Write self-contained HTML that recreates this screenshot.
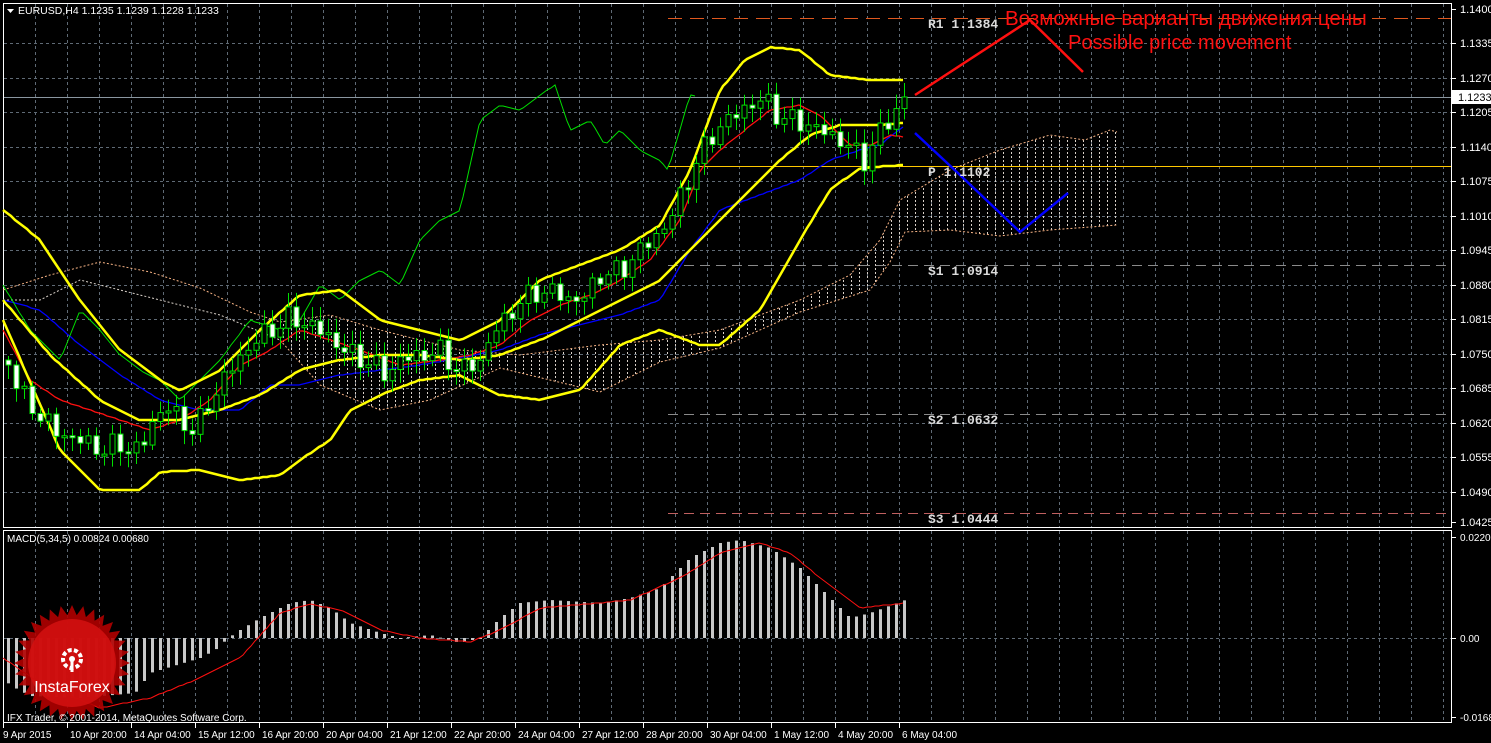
<!DOCTYPE html>
<html><head><meta charset="utf-8">
<style>
html,body{margin:0;padding:0;background:#000;width:1491px;height:743px;overflow:hidden}
svg{display:block}
</style></head>
<body>
<svg id="s" width="1491" height="743" xmlns="http://www.w3.org/2000/svg" font-family="Liberation Sans, DejaVu Sans, sans-serif">
<rect width="1491" height="743" fill="#000"/>
<defs>
<pattern id="hatch" width="8" height="4" patternUnits="userSpaceOnUse">
<rect x="3" y="0" width="1" height="2" fill="#d8d0c8"/>
</pattern>
</defs>
<g id="grid"></g>
<g id="cloud"></g>
<g id="lines"></g>
<g id="candles"></g>
<g id="macd"></g>
<g id="logo"></g>
<g id="txt"></g>
</svg>
<script>
(function(){
var NS="http://www.w3.org/2000/svg";
function el(p,t,a,txt){var e=document.createElementNS(NS,t);for(var k in a)e.setAttribute(k,a[k]);if(txt!=null)e.textContent=txt;document.getElementById(p).appendChild(e);return e;}
function interp(pts,x){if(x<=pts[0][0])return pts[0][1];for(var i=1;i<pts.length;i++){if(x<=pts[i][0]){var a=pts[i-1],b=pts[i];return a[1]+(b[1]-a[1])*(x-a[0])/(b[0]-a[0]);}}return pts[pts.length-1][1];}
function pl(p,pts,c,w,dash){var d=pts.map(function(q){return q[0]+","+q[1]}).join(" ");var a={points:d,fill:"none",stroke:c,"stroke-width":w};if(dash)a["stroke-dasharray"]=dash;el(p,"polyline",a);}

el("grid","rect",{x:3.5,y:3.5,width:1448,height:524,fill:"none",stroke:"#fff","stroke-width":1});
el("grid","rect",{x:3.5,y:530.5,width:1448,height:192,fill:"none",stroke:"#fff","stroke-width":1});
for(var x=35;x<1451;x+=32){el("grid","line",{x1:x+.5,y1:4,x2:x+.5,y2:527,stroke:"#5f6a75","stroke-dasharray":"3,3"});el("grid","line",{x1:x+.5,y1:531,x2:x+.5,y2:722,stroke:"#5f6a75","stroke-dasharray":"3,3"});}
var labs=["1.1400","1.1335","1.1270","1.1205","1.1140","1.1075","1.1010","1.0945","1.0880","1.0815","1.0750","1.0685","1.0620","1.0555","1.0490","1.0425"];
for(var i=0;i<labs.length;i++){var y=Math.round(9+i*34.47);if(i==15)y=522;
 if(i>0&&i<15)el("grid","line",{x1:4,y1:y+.5,x2:1451,y2:y+.5,stroke:"#5f6a75","stroke-dasharray":"3,3"});
 el("grid","line",{x1:1451,y1:y+.5,x2:1456,y2:y+.5,stroke:"#fff"});
 el("txt","text",{x:1460,y:y+4,fill:"#fff","font-size":"11"},labs[i]);}
el("grid","line",{x1:4,y1:638.5,x2:1451,y2:638.5,stroke:"#5f6a75","stroke-dasharray":"3,3"});
[[537,"0.02207"],[638,"0.00"],[717,"-0.01689"]].forEach(function(a){el("grid","line",{x1:1451,y1:a[0]+.5,x2:1456,y2:a[0]+.5,stroke:"#fff"});el("txt","text",{x:1460,y:a[0]+4,fill:"#fff","font-size":"10"},a[1]);});
var dl=["9 Apr 2015","10 Apr 20:00","14 Apr 04:00","15 Apr 12:00","16 Apr 20:00","20 Apr 04:00","21 Apr 12:00","22 Apr 20:00","24 Apr 04:00","27 Apr 12:00","28 Apr 20:00","30 Apr 04:00","1 May 12:00","4 May 20:00","6 May 04:00"];
for(var i=0;i<dl.length;i++){var x=3+64*i;el("grid","line",{x1:x+.5,y1:723,x2:x+.5,y2:728,stroke:"#fff"});el("txt","text",{x:i==0?3:x+3,y:738,fill:"#fff","font-size":"10"},dl[i]);}

el("lines","line",{x1:4,y1:97.5,x2:1451,y2:97.5,stroke:"#8a96a0"});
el("txt","rect",{x:1452,y:90,width:39,height:14,fill:"#fff"});
el("txt","text",{x:1458,y:101,fill:"#000","font-size":"11"},"1.1233");

var cu=[[280,322],[330,315],[380,330],[420,340],[460,350],[520,355],[600,345],[660,340],[720,330],[800,300],[850,275],[880,240],[900,200],[950,170],[1000,150],[1050,135],[1085,140],[1110,130],[1117,132]];
var cd=[[280,340],[320,385],[380,410],[430,400],[500,368],[600,392],[660,362],[720,348],[800,312],[870,290],[890,262],[905,232],[950,230],[1000,236],[1050,230],[1117,225]];
var poly=cu.concat(cd.slice().reverse()).map(function(q){return q.join(",")}).join(" ");
el("cloud","polygon",{points:poly,fill:"url(#hatch)"});
pl("cloud",cu,"#f4b183",1,"2,2");pl("cloud",cd,"#f4b183",1,"2,2");
pl("cloud",[[3,290],[50,275],[100,262],[150,272],[200,288],[250,312],[280,322]],"#f4b183",1,"2,2");
pl("cloud",[[3,300],[40,300],[80,280],[120,290],[160,300],[220,315],[280,340]],"#d8d0c8",1,"2,2");

function piv(y,c,dash,lab){el("lines","line",{x1:668,y1:y+.5,x2:1451,y2:y+.5,stroke:c,"stroke-dasharray":dash||"none"});el("txt","text",{x:928,y:y+10,fill:"#dcdcdc","font-size":"13",style:"font-family:'Liberation Mono',monospace;font-weight:bold"},lab);}
piv(18,"#e0581e","14,8","R1 1.1384");
piv(166,"#ffc800",null,"P  1.1102");
piv(265,"#8a8a8a","10,6","S1 1.0914");
piv(414,"#8a8a8a","10,6","S2 1.0632");
piv(513,"#c06060","10,6","S3 1.0444");

var pp=[[8,360],[20,395],[40,415],[55,432],[80,440],[100,450],[120,445],[140,452],[150,425],[165,405],[180,420],[195,432],[210,400],[230,370],[250,345],[270,330],[290,318],[310,325],[330,338],[350,355],[370,362],[385,375],[400,360],[420,355],[440,352],[460,372],[480,360],[495,330],[520,302],[540,290],[560,295],[580,302],[600,275],[620,272],[635,255],[660,232],[672,215],[685,185],[700,155],[715,130],[735,115],[750,104],[765,100],[780,118],[800,122],[820,130],[840,140],[855,152],[865,160],[875,140],[890,118],[905,97]];
var N=113,cls=[];
for(var i=0;i<N;i++){var x=8+i*8;cls.push(interp(pp,x)+(Math.sin(i*2.3)*8+Math.cos(i*1.7)*5));}
cls[N-1]=97;
var prv=cls[0]-5;
for(var i=0;i<N;i++){var x=8+i*8,c=cls[i],o=prv;prv=c;
 var tp=Math.min(o,c),bt=Math.max(o,c);if(bt-tp<2)bt=tp+2;
 var hi=tp-4-Math.abs(Math.sin(i*3.1))*10,lo=bt+4+Math.abs(Math.cos(i*2.7))*10;
 el("candles","line",{x1:x+.5,y1:hi,x2:x+.5,y2:lo,stroke:"#00e000"});
 el("candles","rect",{x:x-2,y:tp,width:5,height:bt-tp,fill:c>o?"#fff":"#000",stroke:"#00e000","stroke-width":1});}

function smooth(pts,x0,x1){var r=[];for(var x=x0;x<=x1;x+=4)r.push([x,Math.round(interp(pts,x))]);return r;}
var bUp=[[3,210],[40,240],[80,300],[120,350],[160,380],[180,390],[220,370],[260,330],[300,295],[340,290],[380,320],[420,330],[460,340],[500,320],[540,280],[580,265],[620,250],[660,225],[690,170],[720,90],[745,60],[770,47],[800,50],[830,75],[870,80],[905,80]];
var bMid=[[3,300],[50,355],[100,400],[140,420],[180,420],[220,410],[260,395],[300,370],[340,360],[380,355],[420,355],[460,360],[500,355],[540,340],[580,320],[620,300],[660,280],[700,240],[740,200],[780,160],[810,135],[840,125],[880,125],[905,123]];
var bLow=[[3,320],[60,450],[100,490],[140,490],[160,472],[200,470],[240,480],[280,475],[300,460],[330,440],[350,410],[380,395],[420,380],[460,375],[500,395],[540,400],[580,390],[620,345],[660,330],[700,345],[720,345],[760,310],[800,240],[830,190],[860,168],[905,165]];
var kij=[[3,300],[40,310],[80,345],[120,375],[160,400],[200,410],[240,410],[270,385],[300,385],[340,375],[380,370],[420,365],[460,358],[500,350],[540,335],[580,325],[620,315],[660,300],[690,250],[720,210],[760,195],[800,180],[830,160],[860,150],[880,145],[905,125]];
var ten=[[3,330],[30,380],[60,400],[90,410],[120,420],[150,430],[180,420],[210,400],[240,365],[270,350],[300,330],[330,340],[360,350],[400,365],[440,360],[470,355],[500,345],[530,320],[560,305],[590,295],[620,280],[650,260],[680,220],[700,170],[720,150],[745,130],[770,110],[800,105],[820,115],[850,145],[870,145],[890,135],[905,137]];
var chi=[[3,285],[30,330],[60,360],[80,310],[100,330],[120,355],[140,370],[160,380],[180,400],[200,380],[220,360],[250,320],[280,330],[300,320],[320,285],[340,300],[360,280],[380,270],[400,285],[420,240],[440,220],[460,210],[480,120],[500,105],[520,110],[540,95],[555,85],[570,130],[590,120],[605,145],[620,130],[640,150],[660,160],[668,170],[690,95],[698,97]];
pl("lines",smooth(kij,3,905),"#0000ff",1.3);
pl("lines",smooth(ten,3,905),"#ff1010",1.3);
pl("lines",smooth(chi,3,698),"#00e000",1);
pl("lines",smooth(bUp,3,905),"#ffff00",2.5);
pl("lines",smooth(bMid,3,905),"#ffff00",2.5);
pl("lines",smooth(bLow,3,905),"#ffff00",2.5);

pl("lines",[[915,95],[1030,20],[1083,72]],"#ff1010",2.5);
pl("lines",[[915,133],[960,175],[1020,232],[1068,193]],"#0000ff",2.5);
el("txt","text",{x:1005,y:25,fill:"#ff1010","font-size":"20.5"},"Возможные варианты движения цены");
el("txt","text",{x:1068,y:49,fill:"#ff1010","font-size":"20"},"Possible price movement");

var hv=[[3,-42],[15,-50],[30,-58],[80,-60],[135,-55],[150,-35],[200,-20],[215,-12],[228,0],[240,8],[260,20],[290,35],[310,38],[330,30],[350,15],[380,5],[400,0],[430,3],[460,-5],[480,0],[500,20],[520,35],[550,38],[600,35],[630,40],[660,50],[690,80],[720,95],[740,98],[770,90],[800,70],[830,40],[850,20],[870,25],[905,38]];
for(var i=0;i<N;i++){var x=8+i*8,h=interp(hv,x);el("macd","rect",{x:x-1,y:h>0?638-h:638,width:3,height:Math.max(1,Math.abs(h)),fill:"#c8c8c8"});}
var sv=[[3,-20],[40,-45],[100,-70],[150,-60],[200,-40],[240,-20],[280,25],[310,34],[340,28],[380,8],[420,0],[470,-4],[500,8],[540,30],[600,35],[630,38],[680,60],[720,85],[760,95],[790,85],[820,60],[860,30],[905,35]];
pl("macd",smooth(sv,3,905).map(function(q){return [q[0],638-q[1]]}),"#ff1010",1);
el("txt","text",{x:7,y:542,fill:"#fff","font-size":"10"},"MACD(5,34,5) 0.00824 0.00680");

el("txt","polygon",{points:"7,9 14,9 10.5,13",fill:"#fff"});
el("txt","text",{x:18,y:14,fill:"#fff","font-size":"10.5"},"EURUSD,H4  1.1235 1.1239 1.1228 1.1233");

var cx=72,cy=663,pts=[];
for(var k=0;k<64;k++){var a=k*Math.PI/32,r=k%2?48:58;pts.push((cx+r*Math.cos(a)).toFixed(1)+","+(cy+r*Math.sin(a)).toFixed(1));}
el("logo","polygon",{points:pts.join(" "),fill:"#b00000","fill-opacity":"0.9"});
el("logo","circle",{cx:cx,cy:cy,r:44,fill:"#d41010","fill-opacity":"0.85"});
el("logo","circle",{cx:cx,cy:659,r:9,fill:"none",stroke:"#fff","stroke-width":4,"stroke-dasharray":"4,2.3"});
el("logo","circle",{cx:cx,cy:659,r:3,fill:"#fff"});
el("logo","rect",{x:cx-1.5,y:659,width:3,height:13,fill:"#fff"});
el("logo","text",{x:cx,y:692,fill:"#fff","font-size":"16","text-anchor":"middle"},"InstaForex");
el("txt","text",{x:7,y:721,fill:"#fff","font-size":"10"},"IFX Trader, © 2001-2014, MetaQuotes Software Corp.");
})();
</script>
</body></html>
